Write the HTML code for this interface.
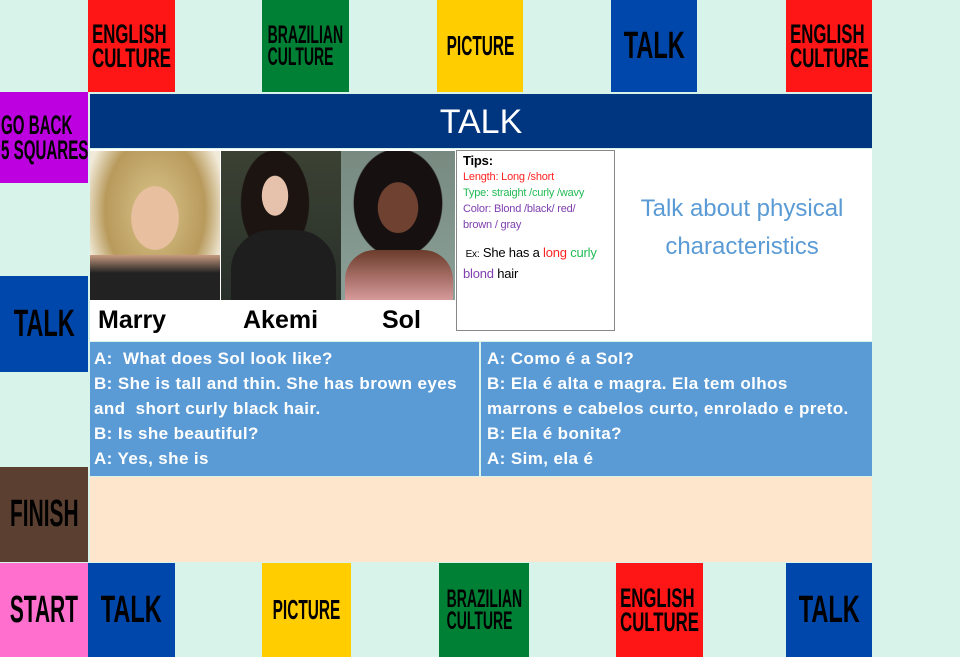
<!DOCTYPE html>
<html><head><meta charset="utf-8"><style>
*{margin:0;padding:0;box-sizing:border-box}
body{width:960px;height:657px;background:#d8f3ea;position:relative;overflow:hidden;font-family:"Liberation Sans",sans-serif}
.sq{position:absolute;display:flex;align-items:center;justify-content:center;font-family:"Liberation Sans",sans-serif;font-weight:bold;color:#000;line-height:0.9;text-align:left;white-space:nowrap}
.sq span{display:inline-block;flex-shrink:0;transform:scaleX(0.62);transform-origin:center}
.r{background:#fe1616}.g{background:#008035}.y{background:#ffcd00}.b{background:#0047ab}
.a{position:absolute}
.dl{position:absolute;color:#fff;font-weight:bold;font-size:17px;line-height:25px;letter-spacing:0.4px;white-space:nowrap}
</style></head><body>
<div class="sq r" style="left:88px;top:0;width:87px;height:92px;font-size:27px"><span>ENGLISH<br>CULTURE</span></div>
<div class="sq g" style="left:262px;top:0;width:87px;height:92px;font-size:25px"><span style="transform:scaleX(0.56)">BRAZILIAN<br>CULTURE</span></div>
<div class="sq y" style="left:437px;top:0;width:86px;height:92px;font-size:28px"><span style="transform:scaleX(0.55)">PICTURE</span></div>
<div class="sq b" style="left:611px;top:0;width:86px;height:92px;font-size:38px"><span>TALK</span></div>
<div class="sq r" style="left:786px;top:0;width:86px;height:92px;font-size:27px"><span>ENGLISH<br>CULTURE</span></div>
<div class="sq" style="left:0;top:92px;width:88px;height:91px;background:#bd00e0;font-size:27px;justify-content:flex-start;padding-left:1px"><span style="transform-origin:left;transform:scaleX(0.56)">GO BACK<br>5 SQUARES</span></div>
<div class="sq b" style="left:0;top:276px;width:88px;height:96px;font-size:38px"><span>TALK</span></div>
<div class="sq" style="left:0;top:467px;width:88px;height:95px;background:#5b4032;font-size:38px"><span style="transform:scaleX(0.55)">FINISH</span></div>
<div class="sq" style="left:0;top:563px;width:88px;height:94px;background:#ff6fce;font-size:38px"><span style="transform:scaleX(0.55)">START</span></div>
<div class="sq b" style="left:88px;top:563px;width:87px;height:94px;font-size:38px"><span>TALK</span></div>
<div class="sq y" style="left:262px;top:563px;width:89px;height:94px;font-size:28px"><span style="transform:scaleX(0.55)">PICTURE</span></div>
<div class="sq g" style="left:439px;top:563px;width:90px;height:94px;font-size:25px"><span style="transform:scaleX(0.56)">BRAZILIAN<br>CULTURE</span></div>
<div class="sq r" style="left:616px;top:563px;width:87px;height:94px;font-size:27px"><span>ENGLISH<br>CULTURE</span></div>
<div class="sq b" style="left:786px;top:563px;width:86px;height:94px;font-size:38px"><span>TALK</span></div>
<div class="a" style="left:90px;top:94px;width:782px;height:54px;background:#003580;color:#fff;font-size:34px;text-align:center;line-height:56px">TALK</div>
<div class="a" style="left:90px;top:149px;width:782px;height:192px;background:#fff"></div>
<div class="a" style="left:90px;top:151px;width:130px;height:149px;background:radial-gradient(ellipse 30% 35% at 50% 45%,#e8c0a0 60%,transparent 62%),radial-gradient(ellipse 55% 70% at 50% 40%,#d9c48a,#b89a5c 70%,#f1ead8 100%)"></div>
<div class="a" style="left:90px;top:255px;width:130px;height:45px;background:linear-gradient(#c79a80,#222 40%)"></div>
<div class="a" style="left:221px;top:151px;width:120px;height:149px;background:radial-gradient(ellipse 18% 22% at 45% 30%,#e6c2ad 60%,transparent 62%),radial-gradient(ellipse 40% 50% at 45% 35%,#1b1410 70%,transparent 72%),linear-gradient(#3b4233,#29302a)"></div>
<div class="a" style="left:231px;top:230px;width:105px;height:70px;background:#1e1e1e;border-radius:40px 40px 0 0"></div>
<div class="a" style="left:341px;top:151px;width:114px;height:149px;background:radial-gradient(ellipse 25% 24% at 50% 38%,#6e4130 70%,transparent 72%),radial-gradient(ellipse 48% 45% at 50% 35%,#161010 80%,transparent 82%),linear-gradient(#788a80,#8aa098)"></div>
<div class="a" style="left:345px;top:250px;width:108px;height:50px;background:linear-gradient(#6b3b2b,#d79a9a);border-radius:30px 30px 0 0"></div>
<div class="a" style="left:98px;top:306px;font-size:25px;font-weight:bold;color:#000">Marry</div>
<div class="a" style="left:243px;top:306px;font-size:25px;font-weight:bold;color:#000">Akemi</div>
<div class="a" style="left:382px;top:306px;font-size:25px;font-weight:bold;color:#000">Sol</div>
<div class="a" style="left:456px;top:150px;width:159px;height:181px;border:1px solid #888;background:#fff;padding:2px 6px;font-size:11px;line-height:16px;letter-spacing:-0.2px;white-space:nowrap">
<div style="font-weight:bold;font-size:13px">Tips:</div>
<div style="color:#f22">Length: Long /short</div>
<div style="color:#2b5">Type: straight /curly /wavy</div>
<div style="color:#8040b0">Color: Blond /black/ red/<br>brown / gray</div>
<div style="margin-top:10px;font-size:13px;line-height:19px"><span style="font-size:10px">&nbsp;Ex:</span> She has a <span style="color:#f22">long</span> <span style="color:#2b5">curly</span><br><span style="color:#8040b0">blond</span> hair</div>
</div>
<div class="a" style="left:622px;top:190px;width:240px;text-align:center;color:#5b9bd5;font-size:24px;line-height:38px">Talk about physical characteristics</div>
<div class="a" style="left:90px;top:342px;width:389px;height:134px;background:#5b9bd5"></div>
<div class="a" style="left:481px;top:342px;width:391px;height:134px;background:#5b9bd5"></div>
<div class="dl" style="left:94px;top:346px">A:&nbsp; What does Sol look like?<br>B: She is tall and thin. She has brown eyes<br>and&nbsp; short curly black hair.<br>B: Is she beautiful?<br>A: Yes, she is</div>
<div class="dl" style="left:487px;top:346px">A: Como é a Sol?<br>B: Ela é alta e magra. Ela tem olhos<br>marrons e cabelos curto, enrolado e preto.<br>B: Ela é bonita?<br>A: Sim, ela é</div>
<div class="a" style="left:90px;top:477px;width:782px;height:85px;background:#fde6cb"></div>
</body></html>
